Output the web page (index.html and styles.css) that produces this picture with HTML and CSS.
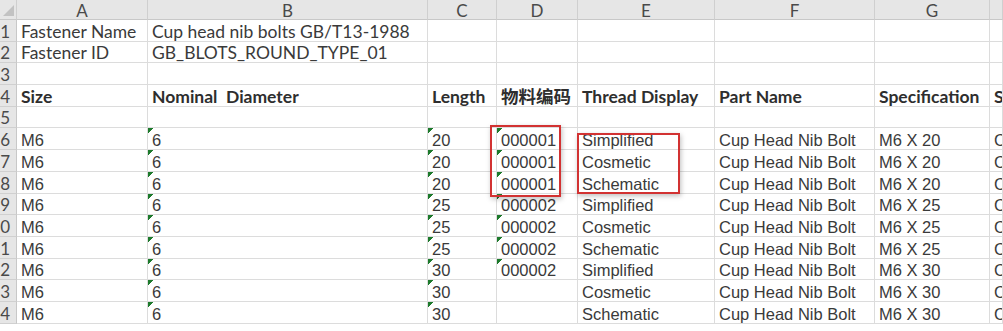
FILE: index.html
```html
<!DOCTYPE html>
<html>
<head>
<meta charset="utf-8">
<link rel="stylesheet" href="styles.css">
</head>
<body>
<div class="sheet">
  <div class="grid">
    <div class="ch corner"><span class="tri"></span></div>
    <div class="ch">A</div><div class="ch">B</div><div class="ch">C</div><div class="ch">D</div><div class="ch">E</div><div class="ch">F</div><div class="ch">G</div><div class="ch"></div>

    <div class="rh">1</div><div class="c lt">Fastener Name</div><div class="c lt">Cup head nib bolts GB/T13-1988</div><div class="c"></div><div class="c"></div><div class="c"></div><div class="c"></div><div class="c"></div><div class="c"></div>
    <div class="rh">2</div><div class="c lt">Fastener ID</div><div class="c lt">GB_BLOTS_ROUND_TYPE_01</div><div class="c"></div><div class="c"></div><div class="c"></div><div class="c"></div><div class="c"></div><div class="c"></div>
    <div class="rh">3</div><div class="c"></div><div class="c"></div><div class="c"></div><div class="c"></div><div class="c"></div><div class="c"></div><div class="c"></div><div class="c"></div>
    <div class="rh">4</div><div class="c b">Size</div><div class="c b">Nominal&nbsp; Diameter</div><div class="c b">Length</div><div class="c b">物料编码</div><div class="c b">Thread Display</div><div class="c b">Part Name</div><div class="c b">Specification</div><div class="c b">S</div>
    <div class="rh">5</div><div class="c"></div><div class="c"></div><div class="c"></div><div class="c"></div><div class="c"></div><div class="c"></div><div class="c"></div><div class="c"></div>

    <div class="rh">6</div><div class="c">M6</div><div class="c t">6</div><div class="c t">20</div><div class="c t">000001</div><div class="c">Simplified</div><div class="c">Cup Head Nib Bolt</div><div class="c">M6 X 20</div><div class="c">C</div>
    <div class="rh">7</div><div class="c">M6</div><div class="c t">6</div><div class="c t">20</div><div class="c t">000001</div><div class="c">Cosmetic</div><div class="c">Cup Head Nib Bolt</div><div class="c">M6 X 20</div><div class="c">C</div>
    <div class="rh">8</div><div class="c">M6</div><div class="c t">6</div><div class="c t">20</div><div class="c t">000001</div><div class="c">Schematic</div><div class="c">Cup Head Nib Bolt</div><div class="c">M6 X 20</div><div class="c">C</div>
    <div class="rh">9</div><div class="c">M6</div><div class="c t">6</div><div class="c t">25</div><div class="c t">000002</div><div class="c">Simplified</div><div class="c">Cup Head Nib Bolt</div><div class="c">M6 X 25</div><div class="c">C</div>
    <div class="rh">10</div><div class="c">M6</div><div class="c t">6</div><div class="c t">25</div><div class="c t">000002</div><div class="c">Cosmetic</div><div class="c">Cup Head Nib Bolt</div><div class="c">M6 X 25</div><div class="c">C</div>
    <div class="rh">11</div><div class="c">M6</div><div class="c t">6</div><div class="c t">25</div><div class="c t">000002</div><div class="c">Schematic</div><div class="c">Cup Head Nib Bolt</div><div class="c">M6 X 25</div><div class="c">C</div>
    <div class="rh">12</div><div class="c">M6</div><div class="c t">6</div><div class="c t">30</div><div class="c t">000002</div><div class="c">Simplified</div><div class="c">Cup Head Nib Bolt</div><div class="c">M6 X 30</div><div class="c">C</div>
    <div class="rh">13</div><div class="c">M6</div><div class="c t">6</div><div class="c t">30</div><div class="c"></div><div class="c">Cosmetic</div><div class="c">Cup Head Nib Bolt</div><div class="c">M6 X 30</div><div class="c">C</div>
    <div class="rh">14</div><div class="c">M6</div><div class="c t">6</div><div class="c t">30</div><div class="c"></div><div class="c">Schematic</div><div class="c">Cup Head Nib Bolt</div><div class="c">M6 X 30</div><div class="c">C</div>
  </div>
  <div class="mark mark-code"></div>
  <div class="mark mark-thread"></div>
</div>
</body>
</html>
```
FILE: styles.css
```css
html, body {
  margin: 0;
  padding: 0;
  background: #ffffff;
}
.sheet {
  position: relative;
  width: 1003px;
  height: 331px;
  overflow: hidden;
  font-family: "Liberation Sans", Arial, sans-serif;
  color: #3a3a3a;
}
.grid {
  display: grid;
  grid-template-columns: 17px 131px 280px 69px 81px 137px 160px 115px 13px;
  grid-template-rows: 20px repeat(14, 21.7px);
}
.ch {
  background: #e6e6e6;
  border-right: 1px solid #cfcfcf;
  border-bottom: 1px solid #c8c8c8;
  box-sizing: border-box;
  text-align: center;
  font-family: "Lato", "Liberation Sans", sans-serif;
  font-size: 17px;
  line-height: 21px;
  color: #4a4a4a;
}
.corner {
  display: flex;
  align-items: flex-end;
  justify-content: flex-end;
  padding: 0 2px 3px 0;
}
.tri {
  width: 0;
  height: 0;
  border-left: 11px solid transparent;
  border-bottom: 11px solid #c2c2c2;
}
.rh {
  background: #e6e6e6;
  border-right: 1px solid #c8c8c8;
  border-bottom: 1px solid #d0d0d0;
  box-sizing: border-box;
  overflow: hidden;
  display: flex;
  justify-content: flex-end;
  align-items: flex-end;
  padding: 0 6px 0 0;
  font-family: "Lato", "Liberation Sans", sans-serif;
  font-size: 17px;
  line-height: 19px;
  color: #4a4a4a;
  white-space: nowrap;
}
.c {
  border-right: 1px solid #dcdcdc;
  border-bottom: 1px solid #dcdcdc;
  box-sizing: border-box;
  display: flex;
  align-items: flex-end;
  padding: 0 0 0 4px;
  font-size: 16.5px;
  line-height: 18px;
  white-space: nowrap;
  overflow: hidden;
}
.lt {
  font-family: "Lato", "Liberation Sans", sans-serif;
  font-size: 17.5px;
}
.b {
  font-family: "Lato", "Noto Sans CJK SC", sans-serif;
  font-weight: 700;
  font-size: 17.5px;
  color: #2e2e2e;
}
.t {
  background: linear-gradient(135deg, #1d7a2c 0 4px, transparent 4px) no-repeat 0 0 / 7px 7px;
}
.mark {
  position: absolute;
  border: 2px solid #d23232;
  box-shadow: 1px 2px 5px rgba(0, 0, 0, 0.25);
}
.mark-code {
  left: 490px;
  top: 125px;
  width: 67px;
  height: 68px;
}
.mark-thread {
  left: 577px;
  top: 133px;
  width: 99px;
  height: 57px;
}
```
